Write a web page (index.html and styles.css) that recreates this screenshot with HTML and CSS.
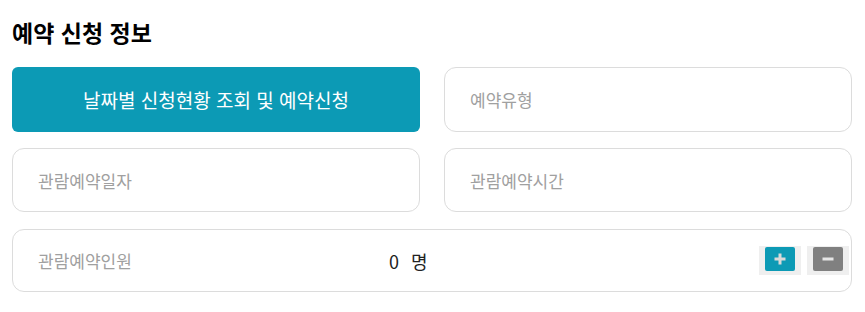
FILE: index.html
```html
<!DOCTYPE html>
<html lang="ko">
<head>
<meta charset="utf-8">
<title>예약 신청 정보</title>
<link rel="stylesheet" href="styles.css">
</head>
<body>
<div class="page">
  <h2 class="title">예약 신청 정보</h2>
  <div class="form-grid">
    <button class="primary-btn" type="button">날짜별 신청현황 조회 및 예약신청</button>
    <div class="field"><span class="placeholder">예약유형</span></div>
    <div class="field"><span class="placeholder">관람예약일자</span></div>
    <div class="field"><span class="placeholder">관람예약시간</span></div>
    <div class="field field-wide">
      <span class="placeholder label-fixed">관람예약인원</span>
      <span class="count"><span class="num">0</span>명</span>
      <div class="steppers">
        <span class="step-wrap"><span class="step step-plus">
          <svg width="12" height="12" viewBox="0 0 12 12"><rect x="0.5" y="4.5" width="11" height="3" fill="#d9d9d9"/><rect x="4.5" y="0.5" width="3" height="11" fill="#d9d9d9"/></svg>
        </span></span>
        <span class="step-wrap"><span class="step step-minus">
          <svg width="12" height="12" viewBox="0 0 12 12"><rect x="0.5" y="4.5" width="11" height="3" fill="#e6e6e6"/></svg>
        </span></span>
      </div>
    </div>
  </div>
</div>
</body>
</html>
```
FILE: styles.css
```css
* { box-sizing: border-box; }
html, body { margin: 0; padding: 0; background: #fff; }
body {
  font-family: "Noto Sans CJK KR", "Noto Sans", sans-serif;
  color: #222;
}
.page {
  padding: 16px 13px 0 12px;
}
.title {
  margin: 0 0 19px 0;
  font-size: 23px;
  line-height: 32px;
  font-weight: 700;
  color: #000;
  letter-spacing: 0;
}
.form-grid {
  display: grid;
  grid-template-columns: 408px 408px;
  grid-template-rows: 65px 64px 64px;
  column-gap: 24px;
  row-gap: 16px;
}
.primary-btn {
  border: 0;
  border-radius: 6px;
  background: #0c9ab5;
  color: #fff;
  font-family: inherit;
  font-size: 19px;
  letter-spacing: 0;
  padding: 0;
  cursor: pointer;
}
.field {
  border: 1px solid #dcdcdc;
  border-radius: 12px;
  display: flex;
  align-items: center;
  padding: 0 2px 0 25px;
  background: #fff;
}
.field-wide {
  grid-column: 1 / span 2;
  margin-top: 1px;
}
.placeholder {
  font-size: 17px;
  color: #a0a0a0;
  letter-spacing: 0;
}
.label-fixed {
  width: 351px;
  flex: 0 0 351px;
}
.count {
  font-size: 18px;
  color: #222;
}
.num { margin-right: 12px; }
.steppers {
  margin-left: auto;
  display: flex;
  gap: 6px;
}
.step-wrap {
  display: block;
  width: 42px;
  height: 29px;
  background: #efefef;
  padding: 1px 6px 4px 6px;
}
.step {
  display: flex;
  align-items: center;
  justify-content: center;
  width: 30px;
  height: 24px;
  border-radius: 2px;
}
.step-plus { background: #0c9ab5; }
.step-minus { background: #808080; }
.step svg { display: block; }
```
